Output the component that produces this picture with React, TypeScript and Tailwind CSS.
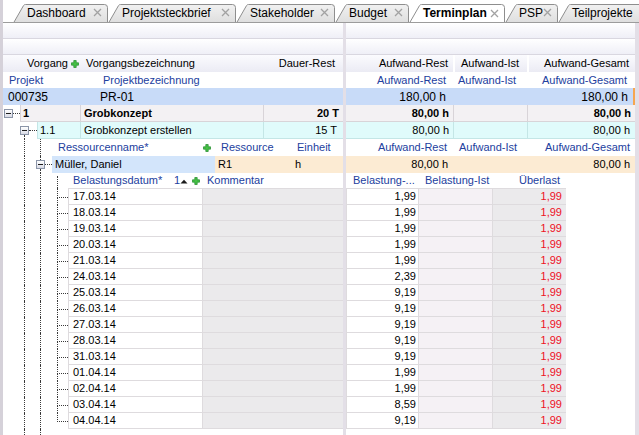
import type { ReactNode } from 'react'

const tabs = [
  { label: 'Dashboard', w: 'w-[95px]', width: 95 },
  { label: 'Projektsteckbrief', w: 'w-[128px]', width: 128 },
  { label: 'Stakeholder', w: 'w-[99px]', width: 99 },
  { label: 'Budget', w: 'w-[74px]', width: 74 },
  { label: 'Terminplan', w: 'w-[96px]', width: 96, active: true },
  { label: 'PSP', w: 'w-[53px]', width: 53 },
  { label: 'Teilprojekte', w: 'w-[90px]', width: 90, noClose: true }
]

const rows = [
  { date: '17.03.14', value: '1,99' },
  { date: '18.03.14', value: '1,99' },
  { date: '19.03.14', value: '1,99' },
  { date: '20.03.14', value: '1,99' },
  { date: '21.03.14', value: '1,99' },
  { date: '24.03.14', value: '2,39' },
  { date: '25.03.14', value: '9,19' },
  { date: '26.03.14', value: '9,19' },
  { date: '27.03.14', value: '9,19' },
  { date: '28.03.14', value: '9,19' },
  { date: '31.03.14', value: '9,19' },
  { date: '01.04.14', value: '1,99' },
  { date: '02.04.14', value: '1,99' },
  { date: '03.04.14', value: '8,59' },
  { date: '04.04.14', value: '9,19' }
]

const dot = 'border-dotted border-[#3a3a3a]'

function Plus() {
  return (
    <svg width="8" height="8" viewBox="0 0 8 8" className="shrink-0">
      <path d="M2.8 0.5h2.4v2.3h2.3v2.4H5.2v2.3H2.8V5.2H0.5V2.8h2.3z" fill="#45c045" stroke="#1f8a2a" strokeWidth="0.7" />
    </svg>
  )
}

function SortUp() {
  return (
    <svg width="8" height="5" viewBox="0 0 8 5" className="shrink-0 mt-[2px]">
      <path d="M0.5 4.5L4 0.8L7.5 4.5z" fill="#1a1a1a" />
    </svg>
  )
}

function Expander() {
  return (
    <div className="w-[9px] h-[9px] shrink-0 border border-[#8b95a8] bg-linear-to-b from-white to-[#d9dbe6] flex items-center justify-center">
      <div className="w-[5px] h-px bg-[#1c1c1c]" />
    </div>
  )
}

function CloseX() {
  return (
    <svg width="9" height="9" viewBox="0 0 9 9" className="shrink-0">
      <path d="M1 1L8 8M8 1L1 8" stroke="#a2a2a2" strokeWidth="1.3" />
    </svg>
  )
}

function TabBar() {
  return (
    <div className="flex items-end h-[23px] pl-[10px] border-b border-[#9c9c9c] overflow-hidden">
      {tabs.map((t, i) => {
        const W = t.width
        const H = 18
        const d = `M0.5 ${H + 1} L10.5 1.6 Q11.2 0.5 12.5 0.5 L${W - 3.5} 0.5 Q${W - 0.5} 0.5 ${W - 0.5} 3.5 L${W - 0.5} ${H + 1}`
        return (
          <div
            key={t.label}
            className={`${t.w} h-[18px] shrink-0 grid ${t.active ? '-mb-px h-[19px] font-bold' : ''}`}
          >
            <svg width={W} height={t.active ? 19 : 18} className="[grid-area:1/1]">
              <defs>
                <linearGradient id={`tab${i}`} x1="0" y1="0" x2="0" y2="1">
                  <stop offset="0" stopColor={t.active ? '#ffffff' : '#f1f1f1'} />
                  <stop offset="1" stopColor={t.active ? '#ffffff' : '#dedede'} />
                </linearGradient>
              </defs>
              <path d={d} fill={`url(#tab${i})`} stroke="#8e8e8e" strokeWidth="1" />
            </svg>
            <div className="[grid-area:1/1] flex items-center pl-[14px] pr-[6px] text-[12px] pb-px">
              <span>{t.label}</span>
              {!t.noClose && (
                <span className="ml-auto">
                  <CloseX />
                </span>
              )}
            </div>
          </div>
        )
      })}
    </div>
  )
}

function Band() {
  return <div className="h-[16px] shrink-0 border-b border-[#d9d7e0] bg-linear-to-b from-white to-[#efeff7]" />
}

function Cell({ className = '', children }: { className?: string; children?: ReactNode }) {
  return <div className={`flex items-center ${className}`}>{children}</div>
}

function LeftPane() {
  return (
    <div className="w-[340px] shrink-0 flex flex-col">
      <Band />
      <Band />
      <div className="flex h-[17px] shrink-0 bg-linear-to-b from-[#fbfbfe] to-[#ebebf4]">
        <Cell className="w-[77px] pl-[24px]">
          Vorgang
          <span className="ml-auto mr-px">
            <Plus />
          </span>
        </Cell>
        <Cell className="w-[183px] pl-[6px]">Vorgangsbezeichnung</Cell>
        <Cell className="flex-1 justify-end pr-[8px]">Dauer-Rest</Cell>
      </div>
      <div className="flex h-[16px] shrink-0 text-[#22409e]">
        <Cell className="w-[97px] pl-[6px]">Projekt</Cell>
        <Cell className="flex-1 pl-[3px]">Projektbezeichnung</Cell>
      </div>
      <div className="flex h-[17px] shrink-0 bg-[#c8dbf8] text-[12px]">
        <Cell className="w-[97px] pl-[5px]">000735</Cell>
        <Cell className="flex-1">PR-01</Cell>
      </div>
      <div className="flex h-[17px] shrink-0">
        <Cell className="w-[17px] pl-px">
          <Expander />
          <div className={`flex-1 border-t ${dot}`} />
        </Cell>
        <div className="flex-1 flex bg-[#f3f1f3] border-l border-b border-[#d8d4d8] font-bold">
          <Cell className="w-[59px] pl-[2px]">1</Cell>
          <Cell className="w-[183px] border-l border-[#d8d4d8] pl-[3px]">Grobkonzept</Cell>
          <Cell className="flex-1 justify-end border-l border-[#d8d4d8] pr-[4px]">20 T</Cell>
        </div>
      </div>
      <div className="flex h-[17px] shrink-0">
        <div className="w-[17px]" />
        <div className="w-[17px] flex flex-col">
          <div className="h-[4px]" />
          <div className="flex items-center h-[9px]">
            <Expander />
            <div className={`flex-1 border-t ${dot}`} />
          </div>
          <div className={`flex-1 ml-[4px] border-l ${dot}`} />
        </div>
        <div className="flex-1 flex bg-[#e0fbfb] border-l border-b border-[#c4e6e6]">
          <Cell className="w-[42px] pl-[2px]">1.1</Cell>
          <Cell className="w-[183px] border-l border-[#c4e6e6] pl-[3px]">Grobkonzept erstellen</Cell>
          <Cell className="flex-1 justify-end border-l border-[#c4e6e6] pr-[6px]">15 T</Cell>
        </div>
      </div>
      <div className="flex h-[17px] shrink-0 text-[#22409e]">
        <div className="w-[21px]" />
        <div className={`w-[16px] border-l ${dot}`} />
        <div className={`w-[17px] border-l ${dot}`} />
        <Cell className="w-[158px] pl-px">
          Ressourcenname*
          <span className="ml-auto mr-[4px]">
            <Plus />
          </span>
        </Cell>
        <Cell className="w-[77px] pl-[6px]">Ressource</Cell>
        <Cell className="flex-1 pl-[5px]">Einheit</Cell>
      </div>
      <div className="flex h-[17px] shrink-0">
        <div className="w-[21px]" />
        <div className={`w-[12px] border-l ${dot}`} />
        <div className="w-[16px] flex flex-col">
          <div className={`h-[4px] ml-[4px] border-l ${dot}`} />
          <div className="flex items-center h-[9px]">
            <Expander />
            <div className={`flex-1 border-t ${dot}`} />
          </div>
          <div className={`flex-1 ml-[4px] border-l ${dot}`} />
        </div>
        <Cell className="w-[163px] bg-[#d3e5fb] pl-[3px]">Müller, Daniel</Cell>
        <div className="flex-1 flex bg-[#fcebd3]">
          <Cell className="w-[77px] pl-[3px]">R1</Cell>
          <Cell className="pl-[3px]">h</Cell>
        </div>
      </div>
      <div className="flex h-[15px] shrink-0 text-[#22409e]">
        <div className="w-[21px]" />
        <div className={`w-[16px] border-l ${dot}`} />
        <div className={`w-[17px] border-l ${dot}`} />
        <div className="w-[11px] flex flex-col">
          <div className="h-[3px]" />
          <div className={`flex-1 border-l ${dot}`} />
        </div>
        <Cell className="w-[135px] pl-[5px]">
          Belastungsdatum*
          <span className="ml-auto">1</span>
          <SortUp />
          <span className="ml-[4px] mr-[3px]">
            <Plus />
          </span>
        </Cell>
        <Cell className="flex-1 pl-[4px]">Kommentar</Cell>
      </div>
      {rows.map((r, i) => {
        const first = i === 0
        const last = i === rows.length - 1
        return (
          <div key={r.date} className={`flex shrink-0 ${first ? 'h-[17px]' : 'h-[16px]'}`}>
            <div className="w-[21px]" />
            <div className={`w-[16px] border-l ${dot}`} />
            <div className={`w-[17px] border-l ${dot}`} />
            <div className="w-[11px] flex flex-col">
              <div className={`${first ? 'h-[10px]' : 'h-[9px]'} border-l border-b ${dot}`} />
              <div className={`flex-1 ${last ? '' : `border-l ${dot}`}`} />
            </div>
            <Cell
              className={`w-[135px] bg-white border-l border-r border-b border-[#dedbde] pl-[4px] ${first ? 'border-t' : ''}`}
            >
              {r.date}
            </Cell>
            <div className={`flex-1 bg-[#ebeaec] border-b border-[#dedbde] ${first ? 'border-t' : ''}`} />
          </div>
        )
      })}
      <div className="flex flex-1">
        <div className="w-[21px]" />
        <div className={`w-[16px] border-l ${dot}`} />
        <div className={`w-[17px] border-l ${dot}`} />
      </div>
    </div>
  )
}

function RightPane() {
  return (
    <div className="w-[289px] shrink-0 flex flex-col">
      <Band />
      <Band />
      <div className="flex h-[17px] shrink-0 bg-linear-to-b from-[#fbfbfe] to-[#ebebf4]">
        <Cell className="w-[107px] justify-end pr-[5px]">Aufwand-Rest</Cell>
        <Cell className="w-[74px] border-l-2 border-white pl-[6px]">Aufwand-Ist</Cell>
        <Cell className="flex-1 justify-end border-l-2 border-white pr-[6px]">Aufwand-Gesamt</Cell>
      </div>
      <div className="flex h-[16px] shrink-0 text-[#22409e]">
        <Cell className="w-[107px] justify-end pr-[7px]">Aufwand-Rest</Cell>
        <Cell className="w-[74px] pl-[5px]">Aufwand-Ist</Cell>
        <Cell className="flex-1 justify-end pr-[8px]">Aufwand-Gesamt</Cell>
      </div>
      <div className="flex h-[17px] shrink-0 bg-[#c8dbf8] text-[12px]">
        <Cell className="w-[107px] justify-end pr-[7px]">180,00 h</Cell>
        <div className="w-[74px]" />
        <Cell className="flex-1 justify-end pr-[5px]">180,00 h</Cell>
        <div className="w-[2px] bg-[#f6a650]" />
      </div>
      <div className="flex h-[17px] shrink-0 bg-[#f3f1f3] border-b border-[#d8d4d8] font-bold">
        <Cell className="w-[107px] justify-end pr-[4px]">80,00 h</Cell>
        <div className="w-[74px] border-l border-[#d8d4d8]" />
        <Cell className="flex-1 justify-end border-l border-[#d8d4d8] pr-[4px]">80,00 h</Cell>
      </div>
      <div className="flex h-[17px] shrink-0 bg-[#e0fbfb] border-b border-[#c4e6e6]">
        <Cell className="w-[107px] justify-end pr-[4px]">80,00 h</Cell>
        <div className="w-[74px] border-l border-[#c4e6e6]" />
        <Cell className="flex-1 justify-end border-l border-[#c4e6e6] pr-[5px]">80,00 h</Cell>
      </div>
      <div className="flex h-[17px] shrink-0 text-[#22409e]">
        <Cell className="w-[107px] justify-end pr-[6px]">Aufwand-Rest</Cell>
        <Cell className="w-[74px] pl-[6px]">Aufwand-Ist</Cell>
        <Cell className="flex-1 justify-end pr-[5px]">Aufwand-Gesamt</Cell>
      </div>
      <div className="flex h-[17px] shrink-0 bg-[#fcebd3]">
        <Cell className="w-[107px] justify-end pr-[5px]">80,00 h</Cell>
        <div className="w-[74px]" />
        <Cell className="flex-1 justify-end pr-[5px]">80,00 h</Cell>
      </div>
      <div className="flex h-[15px] shrink-0 text-[#22409e]">
        <Cell className="w-[73px] pl-[7px]">Belastung-...</Cell>
        <Cell className="w-[74px] pl-[6px]">Belastung-Ist</Cell>
        <Cell className="w-[73px] justify-end pr-[6px]">Überlast</Cell>
      </div>
      {rows.map((r, i) => {
        const first = i === 0
        const top = first ? 'border-t' : ''
        return (
          <div key={r.date} className={`flex shrink-0 ${first ? 'h-[17px]' : 'h-[16px]'}`}>
            <Cell className={`w-[73px] justify-end bg-white border-l border-r border-b border-[#dedbde] pr-[2px] ${top}`}>
              {r.value}
            </Cell>
            <div className={`w-[74px] bg-[#f5f1f5] border-r border-b border-[#dedbde] ${top}`} />
            <Cell className={`w-[73px] justify-end bg-[#ebeaec] border-b border-[#dedbde] pr-[4px] text-[#ee1024] ${top}`}>
              1,99
            </Cell>
          </div>
        )
      })}
    </div>
  )
}

export default function App() {
  return (
    <div className="w-[639px] h-[435px] overflow-hidden bg-white border-l-[3px] border-[#d5d1d9] font-['Liberation_Sans',Arial,sans-serif] text-[11px] leading-none text-black">
      <TabBar />
      <div className="flex h-[412px]">
        <LeftPane />
        <div className="w-[3px] shrink-0 bg-[#e3dfe7]" />
        <RightPane />
        <div className="flex-1 bg-[#e3dfe7]" />
      </div>
    </div>
  )
}
